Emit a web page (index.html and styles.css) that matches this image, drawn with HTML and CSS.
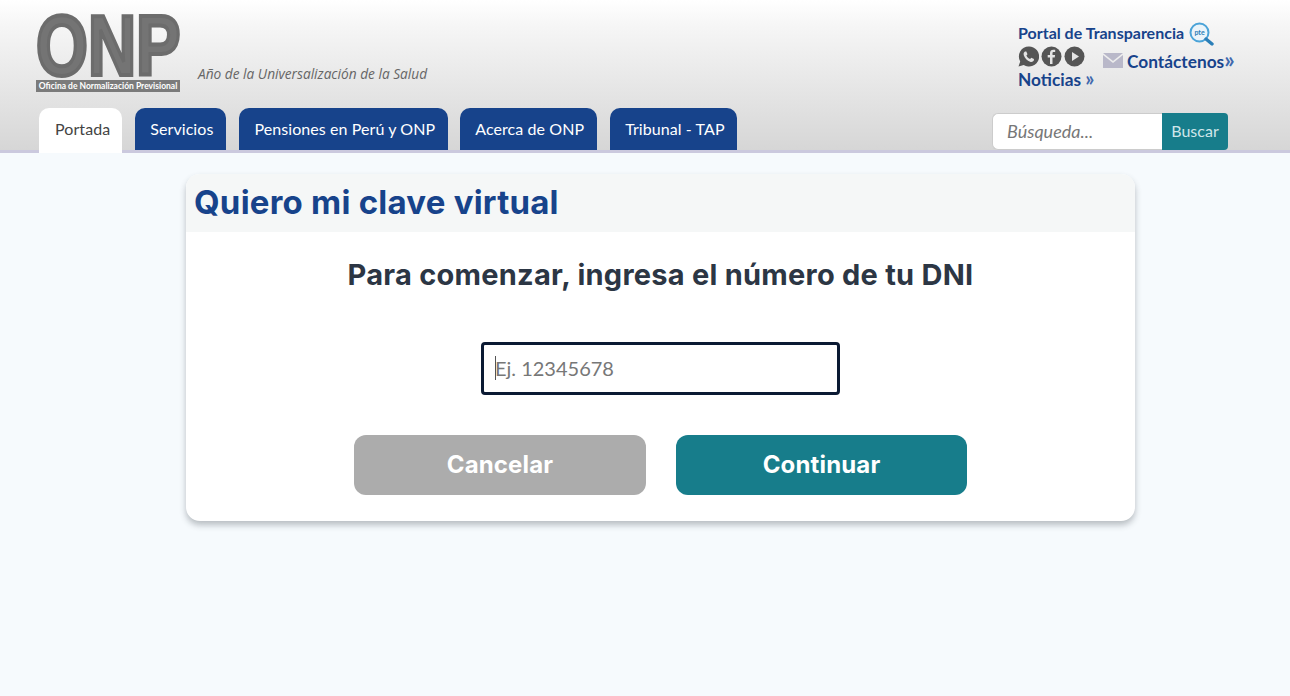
FILE: index.html
```html
<!DOCTYPE html>
<html lang="es">
	<head>
		<title>Quiero mi clave virtual - ONP</title>
		<meta charset="utf-8">
		<link rel="stylesheet" href="styles.css">
	</head>
	<body>
		<header class="hdr">
			<div class="hdr-top">
				<a class="logo" href="#">
					<span class="logo-big">ONP</span>
					<span class="logo-sub">Oficina de Normalización Previsional</span>
				</a>
				<p class="lema">Año de la Universalización de la Salud</p>
				<div class="links">
					<div class="links-row links-first">
						<a href="#">Portal de Transparencia</a>
						<svg class="pte" viewBox="0 0 26 24" width="26" height="24">
							<circle cx="10.5" cy="10.5" r="9" fill="#eaf4fa" stroke="#4aa3d8" stroke-width="2"/>
							<path d="M17 17l6 5" stroke="#2b7fb8" stroke-width="3.4" stroke-linecap="round"/>
							<text x="10.5" y="13" font-size="7" font-weight="700" text-anchor="middle" fill="#2b7fb8" font-family="Lato">pte</text>
						</svg>
					</div>
					<div class="links-row">
						<span class="social">
							<svg viewBox="0 0 21 21" width="21" height="21">
								<path d="M10.8 0.5a10 10 0 0 0-8.6 15L0.5 20.5l5.2-1.6a10 10 0 1 0 5.1-18.400z" fill="#555"/>
								<path d="M7 5.500c-1.200 0.700-1.700 2-1.200 3.800 0.800 2.800 3.500 5.600 6.300 6.400 1.700 0.500 3.100-0.100 3.700-1.300l0.200-1.300-2.700-1.400-1.200 1.300c-1.500-0.500-3-2-3.700-3.600l1.100-1.200-1.200-2.800z" fill="#e4e4e4"/>
							</svg>
							<svg viewBox="0 0 21 21" width="21" height="21">
								<circle cx="10.500" cy="10.500" r="10" fill="#555"/>
								<path d="M11.500 18v-6.500h2.200l0.400-2.600h-2.600V7.400c0-0.800 0.300-1.300 1.300-1.300h1.400V3.800c-0.400-0.100-1.100-0.100-1.900-0.100-2 0-3.300 1.200-3.300 3.400v1.800H6.700v2.600H9V18z" fill="#e4e4e4"/>
							</svg>
							<svg viewBox="0 0 21 21" width="21" height="21">
								<circle cx="10.500" cy="10.500" r="10" fill="#555"/>
								<path d="M8 6l7 4.500-7 4.500z" fill="#e4e4e4"/>
							</svg>
						</span>
						<svg class="mail" viewBox="0 0 20 15" width="20" height="15">
							<path d="M0 0h20L10 8z" fill="#b9b8c9"/>
							<path d="M0 2l10 8 10-8v13H0z" fill="#b9b8c9"/>
						</svg>
						<a class="contact" href="#">Contáctenos<span class="raquo">»</span></a>
					</div>
					<div class="links-row links-big">
						<a href="#">Noticias <span class="raquo">»</span></a>
					</div>
				</div>
			</div>
			<div class="hdr-nav">
				<nav class="tabs">
					<a class="tab tab-on" href="#">Portada</a>
					<a class="tab" href="#">Servicios</a>
					<a class="tab" href="#">Pensiones en Perú y ONP</a>
					<a class="tab tab-tight" href="#">Acerca de ONP</a>
					<a class="tab tab-last" href="#">Tribunal - TAP</a>
				</nav>
				<form class="search">
					<input class="search-in" type="text" placeholder="Búsqueda...">
					<button class="search-btn" type="button">Buscar</button>
				</form>
			</div>
		</header>
		<main class="card">
			<h1 class="card-ttl">Quiero mi clave virtual</h1>
			<div class="card-body">
				<h2 class="lead">Para comenzar, ingresa el número de tu DNI</h2>
				<div class="dni">
					<input class="dni-in" type="text" placeholder="Ej. 12345678">
					<span class="caret"></span>
				</div>
				<div class="btns">
					<button class="btn btn-off" type="button">Cancelar</button>
					<button class="btn btn-go" type="button">Continuar</button>
				</div>
			</div>
		</main>
	</body>
</html>
```

FILE: styles.css
```css
html, body {
	margin: 0;
	height: 100%;
	overflow: hidden;
	background-color: #f6fafd;
	font-family: 'Lato', sans-serif;
}
a {
	text-decoration: none;
}
.hdr {
	height: 150px;
	border-bottom: 3px solid #cbc9de;
	background: linear-gradient(#fff 0, #f6f6f6 25px, #d6d6d6 150px);
}
.hdr-top {
	display: flex;
	height: 108px;
	padding-left: 36px;
}
.logo {
	display: flex;
	flex-direction: column;
	width: 144px;
	height: 80px;
	margin-top: 12px;
}
.logo-big {
	display: block;
	width: max-content;
	height: 68px;
	font-family: 'Liberation Sans', sans-serif;
	font-weight: 700;
	font-size: 85px;
	line-height: 68px;
	color: #747474;
	-webkit-text-stroke: 4px #6c6c6c;
	transform: scaleX(0.785);
	transform-origin: left center;
	white-space: nowrap;
}
.logo-sub {
	height: 12px;
	background: #7b7b7b;
	color: #fff;
	font-size: 8.500px;
	font-weight: 700;
	line-height: 12px;
	text-align: center;
	white-space: nowrap;
}
.lema {
	margin: 65px 0 0 18px;
	width: 820px;
	font-family: 'Open Sans', sans-serif;
	font-style: italic;
	font-size: 13.700px;
	line-height: 17px;
	color: #666;
}
.links {
	padding-top: 22px;
	font-weight: 700;
	font-size: 16px;
	color: #17438b;
}
.links a {
	color: #17438b;
}
.links-row {
	display: flex;
	align-items: center;
	height: 23px;
	white-space: nowrap;
}
.links-first a {
	margin-bottom: 2px;
}
.links-big {
	font-size: 17.300px;
}
.links-big a {
	margin-bottom: 2px;
}
.pte {
	margin-left: 5px;
}
.social {
	display: flex;
	gap: 2px;
	margin-right: 18px;
}
.mail {
	margin: 7px 4px 0 0;
}
.contact {
	align-self: flex-end;
	margin-bottom: -4px;
	font-size: 17.300px;
}
.raquo {
	font-size: 20px;
	line-height: 1;
	color: #3f68ad;
}
.contact .raquo {
	font-size: 23px;
}
.hdr-nav {
	display: flex;
	align-items: flex-end;
	height: 45px;
	padding-left: 39px;
}
.tabs {
	display: flex;
	align-items: flex-start;
	gap: 13px;
	width: 953px;
	height: 45px;
}
.tab {
	display: block;
	height: 42px;
	padding: 0 13px 0 15px;
	border-radius: 10px 10px 0 0;
	background: #17438b;
	color: #fff;
	font-size: 16px;
	line-height: 41px;
	letter-spacing: 0.080px;
}
.tab-on {
	height: 45px;
	padding: 0 12px 0 16px;
	background: #fff;
	color: #444;
}
.tab-tight {
	margin-left: -1px;
}
.tab-last {
	padding-right: 12px;
}
.search {
	display: flex;
	height: 37px;
	margin-bottom: 3px;
}
.search-in {
	box-sizing: border-box;
	width: 170px;
	height: 37px;
	padding: 0 14px 2px;
	border: 1px solid #ccc;
	border-right: 0;
	border-radius: 6px 0 0 6px;
	background: #fff;
	font-family: 'Lato', sans-serif;
	font-style: italic;
	font-size: 18px;
}
.search-in::placeholder {
	color: #777;
	opacity: 1;
}
.search-btn {
	width: 66px;
	height: 37px;
	padding: 0 0 2px;
	border: 0;
	border-radius: 0 4px 4px 0;
	background: #177d8b;
	color: #cfe6ea;
	font-family: 'Lato', sans-serif;
	font-size: 16px;
}
.card {
	width: 949px;
	margin: 21px 0 0 186px;
	border-radius: 14px;
	background: #fff;
	box-shadow: 0 4px 6px rgba(40, 50, 60, 0.3);
}
.card-ttl {
	height: 58px;
	margin: 0;
	padding-left: 8px;
	border-radius: 14px 14px 0 0;
	background: #f5f7f7;
	color: #17438b;
	font-family: 'Inter', sans-serif;
	font-weight: 700;
	font-size: 33px;
	line-height: 56px;
	letter-spacing: 0.230px;
}
.card-body {
	height: 289px;
	padding-top: 25px;
	box-sizing: border-box;
}
.lead {
	margin: 0;
	color: #2c3644;
	font-family: 'Inter', sans-serif;
	font-weight: 700;
	font-size: 29px;
	line-height: 36px;
	letter-spacing: 0.250px;
	text-align: center;
}
.dni {
	position: relative;
	width: 359px;
	margin: 49px auto 0 295px;
}
.dni-in {
	display: block;
	box-sizing: border-box;
	width: 359px;
	height: 53px;
	padding: 0 11px 2px;
	border: 3px solid #0b1a33;
	border-radius: 4px;
	outline: 0;
	background: #fff;
	font-family: 'Lato', sans-serif;
	font-size: 20px;
}
.dni-in::placeholder {
	color: #777;
	opacity: 1;
}
.caret {
	position: absolute;
	left: 14px;
	top: 14px;
	width: 1px;
	height: 24px;
	background: #555;
}
.btns {
	display: flex;
	gap: 30px;
	margin: 40px 0 0 168px;
}
.btn {
	width: 292px;
	height: 60px;
	padding: 0 0 2px;
	border: 0;
	border-radius: 12px;
	color: #fff;
	font-family: 'Inter', sans-serif;
	font-weight: 700;
	font-size: 24px;
	letter-spacing: 0.150px;
}
.btn-off {
	background: #acacac;
}
.btn-go {
	width: 291px;
	background: #177d8b;
}
```
